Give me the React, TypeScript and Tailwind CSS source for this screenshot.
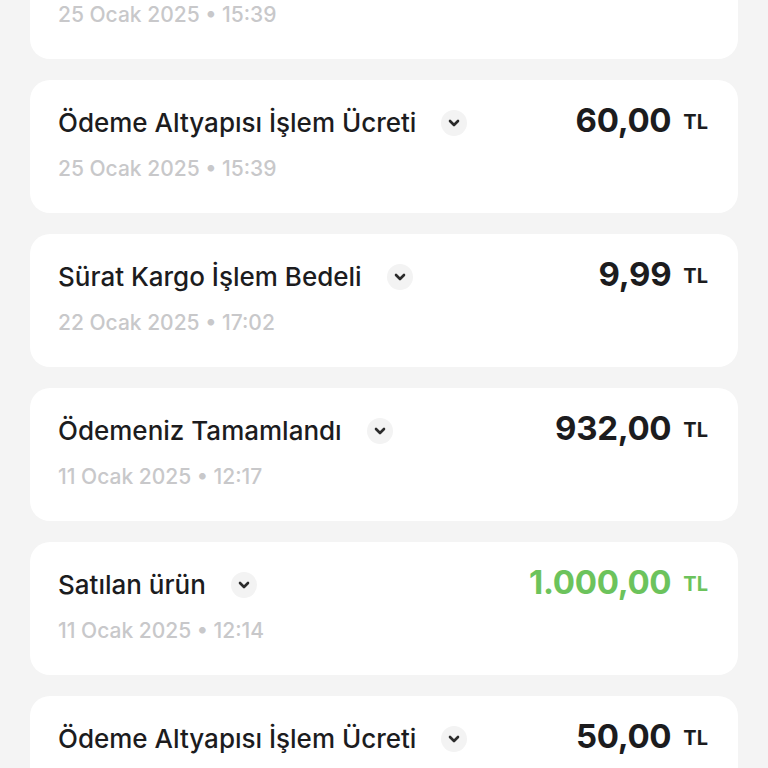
import React from "react";

type Row = { title: string; date: string; amount: string; green?: boolean };

const rows: Row[] = [
  { title: "Ödeme Altyapısı İşlem Ücreti", date: "25 Ocak 2025 • 15:39", amount: "60,00" },
  { title: "Ödeme Altyapısı İşlem Ücreti", date: "25 Ocak 2025 • 15:39", amount: "60,00" },
  { title: "Sürat Kargo İşlem Bedeli", date: "22 Ocak 2025 • 17:02", amount: "9,99" },
  { title: "Ödemeniz Tamamlandı", date: "11 Ocak 2025 • 12:17", amount: "932,00" },
  { title: "Satılan ürün", date: "11 Ocak 2025 • 12:14", amount: "1.000,00", green: true },
  { title: "Ödeme Altyapısı İşlem Ücreti", date: "25 Ocak 2025 • 15:39", amount: "50,00" },
];

function Chevron() {
  return (
    <span className="ml-[25px] flex h-[26px] w-[26px] items-center justify-center rounded-full bg-[#f3f3f3]">
      <svg width="12" height="8" viewBox="0 0 12 8" fill="none">
        <path d="M2 2 L6 6 L10 2" stroke="#2b2b2b" strokeWidth="2.6" strokeLinecap="round" strokeLinejoin="round" />
      </svg>
    </span>
  );
}

function Card({ row }: { row: Row }) {
  const color = row.green ? "text-[#6cc35c]" : "text-[#1c1c1e]";
  return (
    <div className="flex h-[133px] shrink-0 flex-col rounded-[20px] bg-white pl-[28px] pr-[30px]">
      <div className="mt-[24px] flex items-center justify-between">
        <div className="flex items-center">
          <span className="text-[26px] font-medium leading-[38px] tracking-[0px] text-[#1c1c1e]">{row.title}</span>
          <Chevron />
        </div>
        <div className={`flex items-center ${color}`}>
          <span className="mt-[-6px] text-[33px] font-bold leading-[38px] tracking-[-0.3px]">{row.amount}</span>
          <span className="ml-[12px] mt-[-2px] text-[20px] font-bold leading-[38px]">TL</span>
        </div>
      </div>
      <div className="mt-[13px] text-[21px] font-medium leading-[28px] text-[#c8c8ca]">{row.date}</div>
    </div>
  );
}

export default function App() {
  return (
    <div
      className="h-[768px] w-[768px] overflow-hidden bg-[#f4f4f4]"
      style={{ fontFamily: "Inter, 'Noto Sans', sans-serif" }}
    >
      <div className="mt-[-74px] flex flex-col gap-[21px] px-[30px]">
        {rows.map((r, i) => (
          <Card key={i} row={r} />
        ))}
      </div>
    </div>
  );
}
